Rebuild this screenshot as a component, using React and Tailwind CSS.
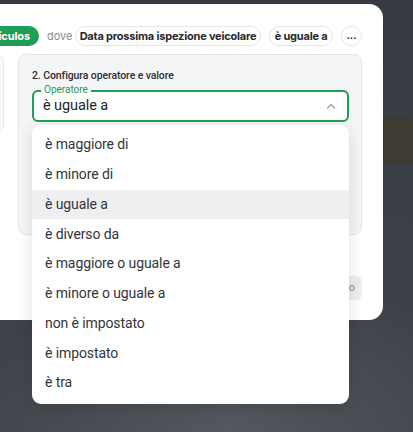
import React from "react";

const items = [
  "è maggiore di",
  "è minore di",
  "è uguale a",
  "è diverso da",
  "è maggiore o uguale a",
  "è minore o uguale a",
  "non è impostato",
  "è impostato",
  "è tra",
];

export default function App() {
  return (
    <div
      className="relative w-[413px] h-[432px] overflow-hidden bg-[radial-gradient(ellipse_260px_160px_at_230px_430px,#54585e,transparent),linear-gradient(to_bottom,#363a41_0px,#393d44_117px,#3d3b32_117px,#3d3b32_163px,#3a3e45_163px,#41454b_432px)]"
      style={{ fontFamily: "Roboto, 'Noto Sans', sans-serif" }}
    >
      {/* dialog */}
      <div className="mt-[4px] ml-[-40px] w-[423px] h-[316px] bg-white rounded-[14px] flex flex-col pr-[21px] pt-[22px]">
        {/* chip row */}
        <div
          className="flex items-center justify-end gap-2 h-[20px] whitespace-nowrap"
          style={{ fontFamily: "Inter, Roboto, sans-serif" }}
        >
          <span className="h-[20px] flex items-center rounded-full bg-[#1f9e57] text-white text-[11px] font-bold pl-[8px] pr-[9px] tracking-[-0.1px]">
            Veículos
          </span>
          <span className="text-[11px] text-[#8a8d92] w-[20px]">dove</span>
          <span className="h-[20px] w-[186px] flex items-center justify-center rounded-full border border-[#e4e5e8] text-[11px] font-bold text-[#27292d] tracking-[-0.2px]">
            Data prossima ispezione veicolare
          </span>
          <span className="h-[20px] w-[64px] flex items-center justify-center rounded-full border border-[#e4e5e8] text-[11px] font-bold text-[#27292d] tracking-[-0.2px]">
            è uguale a
          </span>
          <span className="h-[20px] w-[21px] flex items-center justify-center rounded-full border border-[#e4e5e8] text-[10px] font-bold text-[#27292d] leading-none pb-[3px]">
            ...
          </span>
        </div>

        {/* panels */}
        <div className="flex gap-[14px] mt-[8px] justify-end">
          <div className="w-[60px] h-[79px] rounded-lg border border-[#e6e7ea] bg-[#fafafb]" />
          <div className="w-[344px] h-[181px] rounded-lg border border-[#e6e7ea] bg-[#f4f5f7] pl-[13px] pr-[12px] pt-[14px] flex flex-col">
            <div className="text-[10.5px] leading-[14px] font-medium text-[#2e3034] tracking-[-0.1px]">
              2. Configura operatore e valore
            </div>
            <div className="relative mt-[7px] h-[32px] w-[317px] rounded-[6px] border-2 border-[#1f9e57] bg-white flex items-center pl-[9px] pr-[10px]">
              <span className="absolute left-[7px] top-[-8px] px-[3px] text-[10px] leading-[12px] text-[#1f9e57] bg-[linear-gradient(to_bottom,#f4f5f7_0,#f4f5f7_7px,#ffffff_7px)]">
                Operatore
              </span>
              <span className="flex-1 text-[14.5px] text-[#222428] tracking-[-0.1px]">è uguale a</span>
              <svg width="10" height="6" viewBox="0 0 10 6" fill="none" className="mr-[1px]">
                <path d="M1.5 5L5 1.5L8.5 5" stroke="#9a9da2" strokeWidth="1.2" strokeLinecap="round" strokeLinejoin="round" />
              </svg>
            </div>
          </div>
        </div>

        {/* footer */}
        <div className="flex justify-end mt-[41px]">
          <span className="h-[24px] flex items-center rounded-md bg-[#eceef0] px-[7px] text-[11px] font-semibold text-[#a3a6ab]">
            Applica filtro
          </span>
        </div>
      </div>

      {/* dropdown overlay */}
      <div className="absolute left-[32px] top-[125px] w-[317px] h-[279px] bg-white rounded-[9px] shadow-[0_4px_16px_rgba(0,0,0,0.12)] pt-[5px] pb-[3px] flex flex-col">
        {items.map((t, i) => (
          <div
            key={t}
            className={
              "h-[29.75px] shrink-0 flex items-center pl-[13px] text-[14px] text-[#333539] tracking-[-0.1px] " +
              (i === 2 ? "bg-[#efeff1]" : "")
            }
          >
            {t}
          </div>
        ))}
      </div>
    </div>
  );
}
